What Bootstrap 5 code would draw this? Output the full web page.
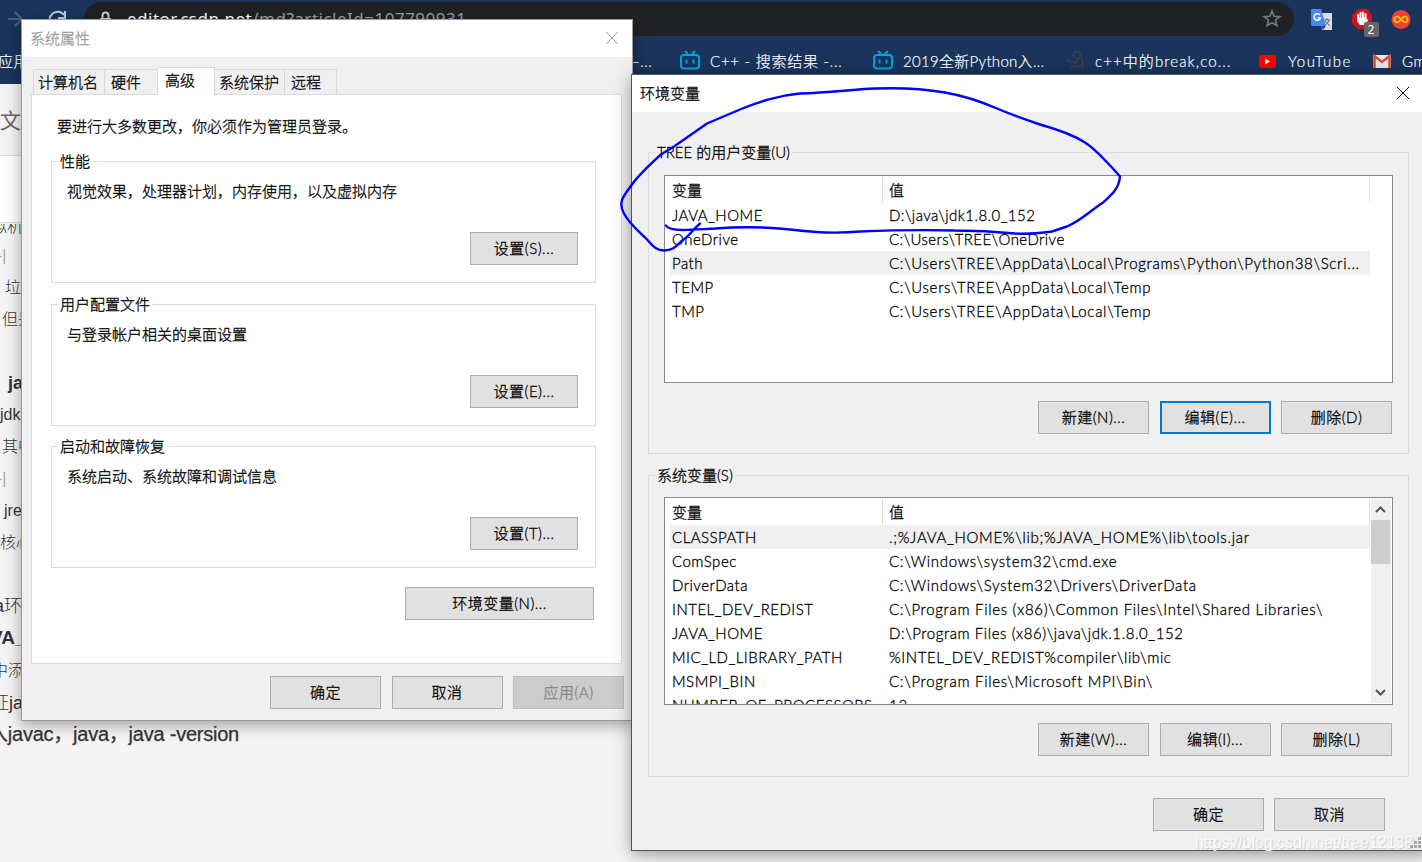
<!DOCTYPE html>
<html lang="zh-CN">
<head>
<meta charset="utf-8">
<title>环境变量</title>
<link href="https://cdn.jsdelivr.net/npm/bootstrap@5.3.0/dist/css/bootstrap.min.css" rel="stylesheet">
<style>
body{width:1422px;height:862px;overflow:hidden;position:relative;background:#f4f4f4;font:15px/20px Lato,"Noto Sans CJK SC",sans-serif;color:#000}
svg{display:block;flex:none}
.browser{background:#1a345c;color:#fff;height:84px}
.toolbar-row{height:37px;padding-top:2px}
.omni{width:1210px;height:34px;border-radius:17px;background:#202124;margin-left:17px;padding:6px 12px 0 16px;font:17px/22px "Noto Sans",sans-serif;color:#9aa0a6}
.url{letter-spacing:.5px}
.marks{height:47px;position:relative}
.mk{height:24px;letter-spacing:.55px;white-space:nowrap;font-weight:300;-webkit-text-stroke:.2px}
.mk span{position:relative;top:1px}
.editor-head{height:72px;background:#f3f3f3;border-bottom:1px solid #dcdcdc;font-size:21px;line-height:72px;color:#666}
.editor-title{height:67px;background:#fff;border-bottom:1px solid #ddd}
.editor-line{height:32px;line-height:32px;white-space:nowrap;color:#333;font-family:"Liberation Sans","Noto Sans CJK SC",sans-serif;font-size:16px;font-weight:300}
.source-lines{padding-top:1px}
.tall{height:63px;line-height:94px}
.heavy{font-weight:700}
.win{position:absolute;background:#f0f0f0;border:1px solid #9b9b9b;font-weight:300;-webkit-text-stroke:.3px}
.win-props{left:21px;top:19px;width:612px;height:702px;box-shadow:0 4px 14px rgba(0,0,0,.35)}
.win-env{left:631px;top:74px;width:800px;height:777px;border-color:#555;box-shadow:0 3px 16px rgba(0,0,0,.38)}
.win-title{height:37px;background:#fff;padding:0 13px 2px 8px;letter-spacing:0}
.tabs{height:28px;margin:10px 0 0 11px;position:relative;z-index:1}
.tab-item{height:26px;border:1px solid #d9d9d9;border-bottom:0;border-left:0;padding-left:5px;line-height:25px;white-space:nowrap}
.tab-item.first{border-left:1px solid #d9d9d9;padding-left:4px}
.tab-item.on{height:28px;background:#fff;padding-left:7px;line-height:24px}
.pane{margin:-1px 0 0 9px;width:591px;height:570px;border:1px solid #dcdcdc;background:#fff;padding:21px 25px 0 19px}
.group{border:1px solid #dcdcdc;position:relative}
.group-name{position:absolute;top:-11px;left:6px;padding:0 2px;background:inherit;white-space:nowrap}
.pane .group{width:545px;height:122px;background:#fff;padding:19px 17px 0 15px}
.pane .group .key{width:108px;margin-top:31px}
.key{background:#e1e1e1;border:1px solid #adadad;width:111px;height:33px;border-radius:0;padding:0;color:#000;font-size:15px;line-height:29px;font-weight:300;letter-spacing:.5px;-webkit-text-stroke:.3px;display:block;flex:none}
.key.def{border:2px solid #0078d7;line-height:27px}
.key.off{background:#ccc;border-color:#bfbfbf;color:#838383}
.env-group{width:761px;height:302px;background:#f0f0f0;padding:22px 16px 0 15px}
.lst{width:729px;height:208px;border:1px solid #828790;background:#fff;overflow:hidden;padding:1px 0 0 5px;position:relative}
.lst-body{width:700px}
.lst-head{height:26px;line-height:27px}
.lst-head div{border-right:1px solid #e0e0e0}
.c1{width:213px;padding-left:2px;flex:none}
.c2{width:487px;padding-left:6px;flex:none}
.lst-row{height:24px;line-height:25px;letter-spacing:.5px;white-space:nowrap}
.lst-row .c2{letter-spacing:.71px}
.lst-row .c2.snug{letter-spacing:.45px}
.lst-row.hot{background:#f0f0f0}
.sbar{position:absolute;right:1px;top:1px;bottom:1px;width:20px;background:#f0f0f0}
.sthumb{width:19px;height:44px;background:#cdcdcd}
.ink{position:absolute;left:0;top:0;pointer-events:none}
.under-strip{position:absolute;left:655px;right:2px;bottom:0;height:11px;background:#f0f0f0}
.stamp{position:absolute;left:1195px;top:832px;font:16px/22px "Liberation Sans",sans-serif;letter-spacing:-.05px;color:#fafafa;text-shadow:1px 1px 1px #ccc;white-space:nowrap}
.ext-count{position:absolute;left:12px;top:13px;width:15px;height:15px;border-radius:2px;background:#666;font:12px/15px "Noto Sans",sans-serif;text-align:center}
.at{position:absolute;top:13px}
</style>
</head>
<body>
<header class="browser">
  <div class="toolbar-row d-flex">
    <svg width="67" height="34" fill="none" stroke-width="2"><path d="M8 17H22M15 10l7 7-7 7" stroke="#4b607f"/><path d="M64 13a8 8 0 1 0 1 8M65 9v7h-7" stroke="#c2cad6"/></svg>
    <div class="omni d-flex justify-content-between">
      <div class="d-flex"><svg width="27" height="22" fill="none"><path d="M2.500 10v-2.500a3 3 0 0 1 6 0v2.500" stroke="#ccc" stroke-width="2"/><path d="M0 10h11v9H0z" fill="#ccc"/></svg><div class="url"><span class="text-white">editor.csdn.net</span>/md?articleId=107790931</div></div>
      <svg width="20" height="22" fill="none" stroke="#777b80" stroke-width="1.600"><path d="M10 3l2.100 5.300 5.700.3-4.400 3.600 1.500 5.500-4.900-3.100-4.900 3.100 1.500-5.500-4.400-3.600 5.700-.3z"/></svg>
    </div>
    <div class="d-flex" style="padding:7px 0 0 17px;gap:18.500px">
      <svg width="22" height="22"><path d="M9 4h12v17H11z" fill="#ddd"/><path d="M0 0h10l5 17H2a2 2 0 0 1-2-2z" fill="#4787ee"/><path d="M10 17h5l-3 4z" fill="#2638c8"/><path d="M9 6a3.300 3.300 0 1 0 .5 3H6.500" stroke="#fff" stroke-width="1.500" fill="none"/><path d="M13 11h6M16 9v2M18 11c-1 3-2 4-4 5M14 12l5 5" stroke="#667" fill="none"/></svg>
      <div class="position-relative"><svg width="21" height="21"><path d="M6 0h9l5 6v8l-5 6H6l-6-6V6z" fill="#d5101b"/><path d="M6 11V6M8.500 10V4M11 10V3.500M13.500 10V5" stroke="#fff" stroke-width="2" stroke-linecap="round"/><path d="M5 9h9.500v2l2-1-3 6H8l-3-4z" fill="#fff"/></svg><div class="ext-count text-white">2</div></div>
      <svg width="21" height="21" fill="none"><circle cx="10" cy="10.500" r="9.500" fill="#ea4335"/><path d="M10 10.500C7.500 7 5.500 7 4.300 8.300s-1.200 3.200 0 4.400 3.200.9 5.700-2.200c2.500-3.500 4.500-3.500 5.700-2.200s1.200 3.200 0 4.400-3.200.9-5.700-2.200z" stroke="#fbbc05" stroke-width="1.700"/></svg>
    </div>
  </div>
  <nav class="marks">
    <div class="mk at" style="left:-2px"><span>应用</span></div>
    <div class="mk at" style="left:631px"><span>–...</span></div>
    <div class="mk at d-flex" style="left:680px;gap:9px"><svg width="21" height="20" viewBox="0 0 21 20" fill="none" stroke="#00a5e0" stroke-width="2"><rect x="1" y="5" width="18" height="13.500" rx="3"/><path d="M5 1l3 3M15 1l-3 3M6.500 9.500v4M13.500 9.500v4"/></svg><span style="letter-spacing:.75px">C++ - 搜索结果 -...</span></div>
    <div class="mk at d-flex" style="left:873px;gap:9px"><svg width="21" height="20" viewBox="0 0 21 20" fill="none" stroke="#00a5e0" stroke-width="2"><rect x="1" y="5" width="18" height="13.500" rx="3"/><path d="M5 1l3 3M15 1l-3 3M6.500 9.500v4M13.500 9.500v4"/></svg><span style="letter-spacing:.3px">2019全新Python入...</span></div>
    <div class="mk at d-flex" style="left:1067px;gap:9px"><svg width="19" height="20" fill="none" stroke="#3c4049" stroke-width="1.500"><circle cx="10" cy="5" r="3.500"/><path d="M1 8c-1 6 7 5 14 0l1 10M3 17l12-1M11 10l-4 5"/></svg><span style="letter-spacing:1.100px">c++中的break,co...</span></div>
    <div class="mk at d-flex" style="left:1258px;gap:11px"><svg width="19" height="20"><rect x="1" y="5" width="17" height="13" rx="3" fill="#f00"/><path d="M7 8.500l5 3-5 3z" fill="#fff"/></svg><span style="letter-spacing:1.500px">YouTube</span></div>
    <div class="mk at d-flex" style="left:1373px;gap:11px"><svg width="18" height="20"><path d="M0 5h18v13H0z" fill="#e7e7e7"/><path d="M1.500 18V6L9 12l7.500-6v12" fill="none" stroke="#d54b3d" stroke-width="2.500"/></svg><span>Gmail</span></div>
  </nav>
</header>
<main>
  <div class="editor-head">文章</div>
  <div class="editor-title"></div>
  <div class="source-lines">
    <div class="editor-line" style="height:16px;line-height:6px;overflow:hidden;margin-left:-9px">拟机</div>
    <div class="editor-line" style="color:#aaa;margin-left:-3px">-|</div>
    <div class="editor-line" style="margin-left:5px;line-height:31px">垃圾</div>
    <div class="editor-line" style="margin-left:2px">但是</div>
    <div class="editor-line tall heavy" style="margin-left:8px;font-size:18px">java</div>
    <div class="editor-line">jdk</div>
    <div class="editor-line" style="margin-left:2px">其中</div>
    <div class="editor-line" style="color:#aaa;margin-left:-3px">-|</div>
    <div class="editor-line" style="margin-left:4px">jre</div>
    <div class="editor-line">核心</div>
    <div class="editor-line tall" style="margin-left:-6px;font-size:18px"><b>a</b>环境</div>
    <div class="editor-line heavy" style="margin-left:-10px;font-size:19px">VA_HOME</div>
    <div class="editor-line" style="margin-left:-8px;line-height:34px">中添加</div>
    <div class="editor-line" style="margin-left:-9px;font-size:18px;line-height:34px">证<b>java</b></div>
    <div class="editor-line" style="margin-left:-12px;font-size:20px;letter-spacing:-.23px;font-weight:400;-webkit-text-stroke:.25px">入javac，java，java -version</div>
  </div>
</main>
<div class="under-strip"></div>

<section class="win win-props">
  <div class="win-title d-flex justify-content-between align-items-center" style="color:#999"><span>系统属性</span><svg width="14" height="14" stroke="#999" fill="none"><path d="M1 1l12 12M13 1L1 13"/></svg></div>
  <div class="tabs d-flex align-items-end">
    <div class="tab-item first" style="width:72px">计算机名</div>
    <div class="tab-item" style="width:53px;padding-left:6px">硬件</div>
    <div class="tab-item on" style="width:57px">高级</div>
    <div class="tab-item" style="width:70px;padding-left:4px">系统保护</div>
    <div class="tab-item" style="width:52px;padding-left:6px">远程</div>
  </div>
  <div class="pane">
    <div style="margin:0 0 25px 6px">要进行大多数更改，你必须作为管理员登录。</div>
    <div class="group"><span class="group-name">性能</span>视觉效果，处理器计划，内存使用，以及虚拟内存<button class="btn key ms-auto">设置(S)...</button></div>
    <div class="group" style="margin-top:21px"><span class="group-name">用户配置文件</span>与登录帐户相关的桌面设置<button class="btn key ms-auto">设置(E)...</button></div>
    <div class="group" style="margin-top:20px"><span class="group-name">启动和故障恢复</span>系统启动、系统故障和调试信息<button class="btn key ms-auto">设置(T)...</button></div>
    <button class="btn key ms-auto" style="width:189px;margin-top:19px;margin-right:2px">环境变量(N)...</button>
  </div>
  <div class="d-flex justify-content-end" style="gap:10.500px;padding:12px 8px 0 0"><button class="btn key">确定</button><button class="btn key">取消</button><button class="btn key off">应用(A)</button></div>
</section>

<section class="win win-env">
  <div class="win-title d-flex justify-content-between align-items-center" style="padding-right:20px"><span>环境变量</span><svg width="14" height="14" stroke="#000" fill="none"><path d="M1 1l12 12M13 1L1 13"/></svg></div>
  <div style="padding:40px 0 0 16px">
    <div class="group env-group"><span class="group-name">TREE 的用户变量(U)</span>
      <div class="lst"><div class="lst-body">
        <div class="lst-head d-flex"><div class="c1">变量</div><div class="c2">值</div></div>
        <div class="lst-row d-flex"><div class="c1">JAVA_HOME</div><div class="c2 snug">D:\java\jdk1.8.0_152</div></div>
        <div class="lst-row d-flex"><div class="c1">OneDrive</div><div class="c2 snug">C:\Users\TREE\OneDrive</div></div>
        <div class="lst-row d-flex hot"><div class="c1">Path</div><div class="c2">C:\Users\TREE\AppData\Local\Programs\Python\Python38\Scri...</div></div>
        <div class="lst-row d-flex"><div class="c1">TEMP</div><div class="c2">C:\Users\TREE\AppData\Local\Temp</div></div>
        <div class="lst-row d-flex"><div class="c1">TMP</div><div class="c2">C:\Users\TREE\AppData\Local\Temp</div></div>
      </div></div>
      <div class="d-flex justify-content-end" style="gap:10.500px;margin-top:18px"><button class="btn key">新建(N)...</button><button class="btn key def">编辑(E)...</button><button class="btn key">删除(D)</button></div>
    </div>
    <div class="group env-group" style="margin-top:21px;padding-top:21px"><span class="group-name">系统变量(S)</span>
      <div class="lst"><div class="lst-body">
        <div class="lst-head d-flex"><div class="c1">变量</div><div class="c2">值</div></div>
        <div class="lst-row d-flex hot"><div class="c1">CLASSPATH</div><div class="c2">.;%JAVA_HOME%\lib;%JAVA_HOME%\lib\tools.jar</div></div>
        <div class="lst-row d-flex"><div class="c1">ComSpec</div><div class="c2">C:\Windows\system32\cmd.exe</div></div>
        <div class="lst-row d-flex"><div class="c1">DriverData</div><div class="c2">C:\Windows\System32\Drivers\DriverData</div></div>
        <div class="lst-row d-flex"><div class="c1">INTEL_DEV_REDIST</div><div class="c2">C:\Program Files (x86)\Common Files\Intel\Shared Libraries\</div></div>
        <div class="lst-row d-flex"><div class="c1">JAVA_HOME</div><div class="c2" style="letter-spacing:.58px">D:\Program Files (x86)\java\jdk.1.8.0_152</div></div>
        <div class="lst-row d-flex"><div class="c1">MIC_LD_LIBRARY_PATH</div><div class="c2" style="letter-spacing:.6px">%INTEL_DEV_REDIST%compiler\lib\mic</div></div>
        <div class="lst-row d-flex"><div class="c1">MSMPI_BIN</div><div class="c2">C:\Program Files\Microsoft MPI\Bin\</div></div>
        <div class="lst-row d-flex"><div class="c1">NUMBER_OF_PROCESSORS</div><div class="c2">12</div></div>
      </div>
      <div class="sbar d-flex flex-column"><svg width="20" height="21" fill="none" stroke="#555" stroke-width="2"><path d="M5 13l4.500-4.500L14 13"/></svg><div class="sthumb"></div><svg class="mt-auto" width="20" height="21" fill="none" stroke="#555" stroke-width="2"><path d="M5 8l4.500 4.500L14 8"/></svg></div></div>
      <div class="d-flex justify-content-end" style="gap:10.500px;margin-top:18px"><button class="btn key">新建(W)...</button><button class="btn key">编辑(I)...</button><button class="btn key">删除(L)</button></div>
    </div>
    <div class="d-flex" style="gap:10px;margin:21px 0 0 505px"><button class="btn key">确定</button><button class="btn key">取消</button></div>
  </div>
</section>
<svg class="ink" width="1422" height="862" fill="none" stroke="#00f" stroke-width="2.400" stroke-linecap="round" stroke-linejoin="round"><path transform="translate(0 .5)" d="M700 223C693 229 689 236 681 241C676 246 673 250 664 250C655 250 652 244 646 238C639 231 629 223 624 213C617 201 625 194 632 184C640 173 650 164 661 154L674 146L707 123L740 109C758 102 776 95 800 93C832 92 850 89 875 88C903 87 928 89 945 92C962 95 981 101 997 108C1011 114 1025 119 1040 124C1058 129 1074 135 1085 142C1096 149 1105 160 1112 167L1120 176C1119 188 1112 194 1103 202C1088 212 1081 220 1067 226L1052 231C1037 233 1028 234 1015 233C995 231 980 230 955 230C915 229 885 230 860 231C838 233 813 232 790 229C762 226 740 226 715 228C693 229 670 232 666 225"/></svg>
<div class="stamp">https://blog.csdn.net/tree12138</div>
<svg class="ink" style="left:1410px;top:836px" width="12" height="14" fill="#aaa"><path d="M8 1h3v3H8zM4 5h3v3H4zM8 5h3v3H8zM0 9h3v3H0zM4 9h3v3H4zM8 9h3v3H8z"/></svg>
<script src="https://cdn.jsdelivr.net/npm/bootstrap@5.3.0/dist/js/bootstrap.bundle.min.js"></script>
</body>
</html>
